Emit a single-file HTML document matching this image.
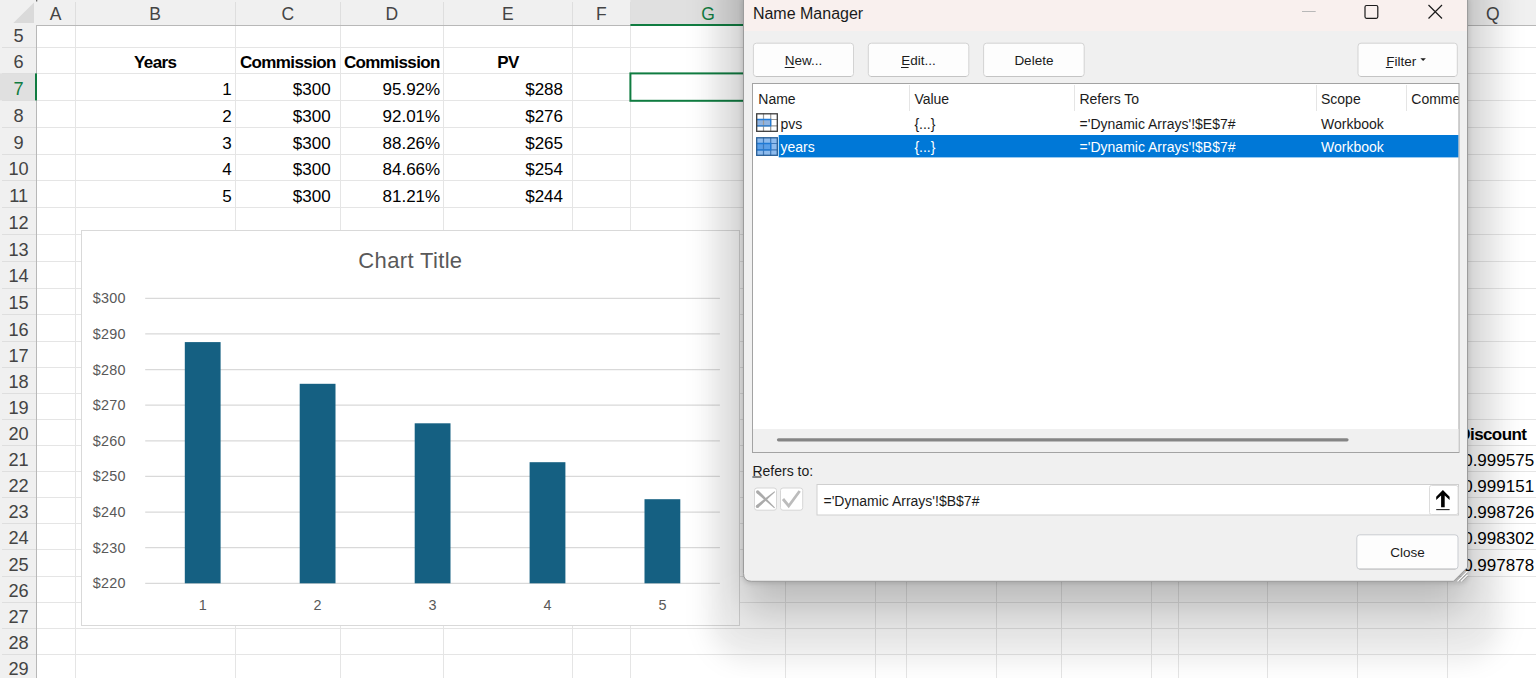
<!DOCTYPE html>
<html><head><meta charset="utf-8"><title>Name Manager</title>
<style>
html,body{margin:0;padding:0;width:1536px;height:678px;overflow:hidden;background:#fff;font-family:"Liberation Sans", sans-serif;}
svg text{font-family:"Liberation Sans", sans-serif;}
</style></head><body>
<svg width="1536" height="678" viewBox="0 0 1536 678" style="position:absolute;left:0;top:0">
<rect x="0" y="0" width="1536" height="678" fill="#ffffff"/>
<path d="M75.5 25.5V678 M235.5 25.5V678 M340.5 25.5V678 M443.5 25.5V678 M572.5 25.5V678 M630.5 25.5V678 M785.5 25.5V678 M875.5 25.5V678 M906.5 25.5V678 M996.5 25.5V678 M1061.5 25.5V678 M1151.5 25.5V678 M1178.5 25.5V678 M1267.5 25.5V678 M1357.5 25.5V678 M1447.5 25.5V678 M1538.5 25.5V678 M36 47.5H1536 M36 73.5H1536 M36 100.5H1536 M36 127.5H1536 M36 154.5H1536 M36 180.5H1536 M36 207.5H1536 M36 234.5H1536 M36 261.5H1536 M36 288.5H1536 M36 314.5H1536 M36 341.5H1536 M36 367.5H1536 M36 393.5H1536 M36 419.5H1536 M36 445.5H1536 M36 471.5H1536 M36 497.5H1536 M36 523.5H1536 M36 549.5H1536 M36 576.5H1536 M36 602.5H1536 M36 628.5H1536 M36 654.5H1536 M36 680.5H1536" stroke="#e5e5e5" stroke-width="1" fill="none"/>
<rect x="630.4" y="73.4" width="155" height="27.4" fill="none" stroke="#107c41" stroke-width="2"/>
<rect x="0" y="0" width="1536" height="25.5" fill="#f0f0f0"/>
<rect x="0" y="0" width="36.4" height="678" fill="#f0f0f0"/>
<rect x="630.4" y="0" width="155.10000000000002" height="25.5" fill="#e0e0e0"/>
<rect x="0" y="73.4" width="36.4" height="27.0" fill="#e0e0e0"/>
<path d="M75.5 2V25 M235.5 2V25 M340.5 2V25 M443.5 2V25 M572.5 2V25 M630.5 2V25 M785.5 2V25 M875.5 2V25 M906.5 2V25 M996.5 2V25 M1061.5 2V25 M1151.5 2V25 M1178.5 2V25 M1267.5 2V25 M1357.5 2V25 M1447.5 2V25 M1538.5 2V25 M2 47.5H36 M2 73.5H36 M2 100.5H36 M2 127.5H36 M2 154.5H36 M2 180.5H36 M2 207.5H36 M2 234.5H36 M2 261.5H36 M2 288.5H36 M2 314.5H36 M2 341.5H36 M2 367.5H36 M2 393.5H36 M2 419.5H36 M2 445.5H36 M2 471.5H36 M2 497.5H36 M2 523.5H36 M2 549.5H36 M2 576.5H36 M2 602.5H36 M2 628.5H36 M2 654.5H36 M2 680.5H36" stroke="#dedede" stroke-width="1" fill="none"/>
<path d="M36 25.5H1536 M36.5 25V678" stroke="#b8b8b8" stroke-width="1" fill="none"/>
<rect x="630.4" y="24" width="155.10000000000002" height="2" fill="#107c41"/>
<rect x="35" y="73.4" width="2" height="27.0" fill="#107c41"/>
<rect x="36" y="0" width="1.3" height="1.5" fill="#6a6a6a"/>
<path d="M13.3 23 L34 2.5 L34 23 Z" fill="#dadada"/>
<text x="55.7" y="19.7" font-size="17.5" fill="#444444" text-anchor="middle" font-family='"Liberation Sans", sans-serif'>A</text>
<text x="155.2" y="19.7" font-size="17.5" fill="#444444" text-anchor="middle" font-family='"Liberation Sans", sans-serif'>B</text>
<text x="287.9" y="19.7" font-size="17.5" fill="#444444" text-anchor="middle" font-family='"Liberation Sans", sans-serif'>C</text>
<text x="391.9" y="19.7" font-size="17.5" fill="#444444" text-anchor="middle" font-family='"Liberation Sans", sans-serif'>D</text>
<text x="507.9" y="19.7" font-size="17.5" fill="#444444" text-anchor="middle" font-family='"Liberation Sans", sans-serif'>E</text>
<text x="601.4" y="19.7" font-size="17.5" fill="#444444" text-anchor="middle" font-family='"Liberation Sans", sans-serif'>F</text>
<text x="708.0" y="19.7" font-size="17.5" fill="#107c41" text-anchor="middle" font-family='"Liberation Sans", sans-serif'>G</text>
<text x="830.5" y="19.7" font-size="17.5" fill="#444444" text-anchor="middle" font-family='"Liberation Sans", sans-serif'>H</text>
<text x="891.0" y="19.7" font-size="17.5" fill="#444444" text-anchor="middle" font-family='"Liberation Sans", sans-serif'>I</text>
<text x="951.5" y="19.7" font-size="17.5" fill="#444444" text-anchor="middle" font-family='"Liberation Sans", sans-serif'>J</text>
<text x="1029.0" y="19.7" font-size="17.5" fill="#444444" text-anchor="middle" font-family='"Liberation Sans", sans-serif'>K</text>
<text x="1106.4" y="19.7" font-size="17.5" fill="#444444" text-anchor="middle" font-family='"Liberation Sans", sans-serif'>L</text>
<text x="1164.8" y="19.7" font-size="17.5" fill="#444444" text-anchor="middle" font-family='"Liberation Sans", sans-serif'>M</text>
<text x="1223.0" y="19.7" font-size="17.5" fill="#444444" text-anchor="middle" font-family='"Liberation Sans", sans-serif'>N</text>
<text x="1312.7" y="19.7" font-size="17.5" fill="#444444" text-anchor="middle" font-family='"Liberation Sans", sans-serif'>O</text>
<text x="1402.7" y="19.7" font-size="17.5" fill="#444444" text-anchor="middle" font-family='"Liberation Sans", sans-serif'>P</text>
<text x="1492.9" y="19.7" font-size="17.5" fill="#444444" text-anchor="middle" font-family='"Liberation Sans", sans-serif'>Q</text>
<text x="18.6" y="42.3" font-size="18.2" fill="#444444" text-anchor="middle" font-family='"Liberation Sans", sans-serif'>5</text>
<text x="18.6" y="67.7" font-size="18.2" fill="#444444" text-anchor="middle" font-family='"Liberation Sans", sans-serif'>6</text>
<text x="18.6" y="94.7" font-size="18.2" fill="#107c41" text-anchor="middle" font-family='"Liberation Sans", sans-serif'>7</text>
<text x="18.6" y="121.7" font-size="18.2" fill="#444444" text-anchor="middle" font-family='"Liberation Sans", sans-serif'>8</text>
<text x="18.6" y="148.5" font-size="18.2" fill="#444444" text-anchor="middle" font-family='"Liberation Sans", sans-serif'>9</text>
<text x="18.6" y="175.1" font-size="18.2" fill="#444444" text-anchor="middle" font-family='"Liberation Sans", sans-serif'>10</text>
<text x="18.6" y="202.0" font-size="18.2" fill="#444444" text-anchor="middle" font-family='"Liberation Sans", sans-serif'>11</text>
<text x="18.6" y="228.7" font-size="18.2" fill="#444444" text-anchor="middle" font-family='"Liberation Sans", sans-serif'>12</text>
<text x="18.6" y="255.9" font-size="18.2" fill="#444444" text-anchor="middle" font-family='"Liberation Sans", sans-serif'>13</text>
<text x="18.6" y="282.3" font-size="18.2" fill="#444444" text-anchor="middle" font-family='"Liberation Sans", sans-serif'>14</text>
<text x="18.6" y="309.0" font-size="18.2" fill="#444444" text-anchor="middle" font-family='"Liberation Sans", sans-serif'>15</text>
<text x="18.6" y="336.0" font-size="18.2" fill="#444444" text-anchor="middle" font-family='"Liberation Sans", sans-serif'>16</text>
<text x="18.6" y="362.1" font-size="18.2" fill="#444444" text-anchor="middle" font-family='"Liberation Sans", sans-serif'>17</text>
<text x="18.6" y="387.7" font-size="18.2" fill="#444444" text-anchor="middle" font-family='"Liberation Sans", sans-serif'>18</text>
<text x="18.6" y="413.7" font-size="18.2" fill="#444444" text-anchor="middle" font-family='"Liberation Sans", sans-serif'>19</text>
<text x="18.6" y="439.8" font-size="18.2" fill="#444444" text-anchor="middle" font-family='"Liberation Sans", sans-serif'>20</text>
<text x="18.6" y="465.7" font-size="18.2" fill="#444444" text-anchor="middle" font-family='"Liberation Sans", sans-serif'>21</text>
<text x="18.6" y="491.8" font-size="18.2" fill="#444444" text-anchor="middle" font-family='"Liberation Sans", sans-serif'>22</text>
<text x="18.6" y="517.8" font-size="18.2" fill="#444444" text-anchor="middle" font-family='"Liberation Sans", sans-serif'>23</text>
<text x="18.6" y="544.1" font-size="18.2" fill="#444444" text-anchor="middle" font-family='"Liberation Sans", sans-serif'>24</text>
<text x="18.6" y="570.6" font-size="18.2" fill="#444444" text-anchor="middle" font-family='"Liberation Sans", sans-serif'>25</text>
<text x="18.6" y="596.7" font-size="18.2" fill="#444444" text-anchor="middle" font-family='"Liberation Sans", sans-serif'>26</text>
<text x="18.6" y="623.0" font-size="18.2" fill="#444444" text-anchor="middle" font-family='"Liberation Sans", sans-serif'>27</text>
<text x="18.6" y="648.8" font-size="18.2" fill="#444444" text-anchor="middle" font-family='"Liberation Sans", sans-serif'>28</text>
<text x="18.6" y="674.8" font-size="18.2" fill="#444444" text-anchor="middle" font-family='"Liberation Sans", sans-serif'>29</text>
<text x="155.2" y="67.8" font-size="17" fill="#000" text-anchor="middle" font-weight="bold" letter-spacing="-0.6" font-family='"Liberation Sans", sans-serif'>Years</text>
<text x="287.9" y="67.8" font-size="17" fill="#000" text-anchor="middle" font-weight="bold" letter-spacing="-0.6" font-family='"Liberation Sans", sans-serif'>Commission</text>
<text x="391.9" y="67.8" font-size="17" fill="#000" text-anchor="middle" font-weight="bold" letter-spacing="-0.6" font-family='"Liberation Sans", sans-serif'>Commission</text>
<text x="507.9" y="67.8" font-size="17" fill="#000" text-anchor="middle" font-weight="bold" letter-spacing="-0.6" font-family='"Liberation Sans", sans-serif'>PV</text>
<text x="231.8" y="94.7" font-size="17" fill="#000" text-anchor="end" font-family='"Liberation Sans", sans-serif'>1</text>
<text x="330.6" y="94.7" font-size="17" fill="#000" text-anchor="end" font-family='"Liberation Sans", sans-serif'>$300</text>
<text x="440.2" y="94.7" font-size="17" fill="#000" text-anchor="end" font-family='"Liberation Sans", sans-serif'>95.92%</text>
<text x="563.0" y="94.7" font-size="17" fill="#000" text-anchor="end" font-family='"Liberation Sans", sans-serif'>$288</text>
<text x="231.8" y="121.7" font-size="17" fill="#000" text-anchor="end" font-family='"Liberation Sans", sans-serif'>2</text>
<text x="330.6" y="121.7" font-size="17" fill="#000" text-anchor="end" font-family='"Liberation Sans", sans-serif'>$300</text>
<text x="440.2" y="121.7" font-size="17" fill="#000" text-anchor="end" font-family='"Liberation Sans", sans-serif'>92.01%</text>
<text x="563.0" y="121.7" font-size="17" fill="#000" text-anchor="end" font-family='"Liberation Sans", sans-serif'>$276</text>
<text x="231.8" y="148.5" font-size="17" fill="#000" text-anchor="end" font-family='"Liberation Sans", sans-serif'>3</text>
<text x="330.6" y="148.5" font-size="17" fill="#000" text-anchor="end" font-family='"Liberation Sans", sans-serif'>$300</text>
<text x="440.2" y="148.5" font-size="17" fill="#000" text-anchor="end" font-family='"Liberation Sans", sans-serif'>88.26%</text>
<text x="563.0" y="148.5" font-size="17" fill="#000" text-anchor="end" font-family='"Liberation Sans", sans-serif'>$265</text>
<text x="231.8" y="175.1" font-size="17" fill="#000" text-anchor="end" font-family='"Liberation Sans", sans-serif'>4</text>
<text x="330.6" y="175.1" font-size="17" fill="#000" text-anchor="end" font-family='"Liberation Sans", sans-serif'>$300</text>
<text x="440.2" y="175.1" font-size="17" fill="#000" text-anchor="end" font-family='"Liberation Sans", sans-serif'>84.66%</text>
<text x="563.0" y="175.1" font-size="17" fill="#000" text-anchor="end" font-family='"Liberation Sans", sans-serif'>$254</text>
<text x="231.8" y="202.0" font-size="17" fill="#000" text-anchor="end" font-family='"Liberation Sans", sans-serif'>5</text>
<text x="330.6" y="202.0" font-size="17" fill="#000" text-anchor="end" font-family='"Liberation Sans", sans-serif'>$300</text>
<text x="440.2" y="202.0" font-size="17" fill="#000" text-anchor="end" font-family='"Liberation Sans", sans-serif'>81.21%</text>
<text x="563.0" y="202.0" font-size="17" fill="#000" text-anchor="end" font-family='"Liberation Sans", sans-serif'>$244</text>
<text x="1526.3" y="439.9" font-size="17" fill="#000" text-anchor="end" font-weight="bold" letter-spacing="-0.6" font-family='"Liberation Sans", sans-serif'>Discount</text>
<text x="1534.1" y="465.7" font-size="17" fill="#000" text-anchor="end" font-family='"Liberation Sans", sans-serif'>0.999575</text>
<text x="1534.1" y="491.8" font-size="17" fill="#000" text-anchor="end" font-family='"Liberation Sans", sans-serif'>0.999151</text>
<text x="1534.1" y="517.8" font-size="17" fill="#000" text-anchor="end" font-family='"Liberation Sans", sans-serif'>0.998726</text>
<text x="1534.1" y="544.1" font-size="17" fill="#000" text-anchor="end" font-family='"Liberation Sans", sans-serif'>0.998302</text>
<text x="1534.1" y="570.6" font-size="17" fill="#000" text-anchor="end" font-family='"Liberation Sans", sans-serif'>0.997878</text>
<rect x="81.5" y="230.5" width="658" height="395" fill="#ffffff" stroke="#d9d9d9" stroke-width="1"/>
<text x="410.4" y="268.1" font-size="22" letter-spacing="0.35" fill="#595959" text-anchor="middle" font-family='"Liberation Sans", sans-serif'>Chart Title</text>
<text x="125.9" y="303.3" font-size="14.4" letter-spacing="0.3" fill="#595959" text-anchor="end" font-family='"Liberation Sans", sans-serif'>$300</text>
<text x="125.9" y="338.9" font-size="14.4" letter-spacing="0.3" fill="#595959" text-anchor="end" font-family='"Liberation Sans", sans-serif'>$290</text>
<text x="125.9" y="374.6" font-size="14.4" letter-spacing="0.3" fill="#595959" text-anchor="end" font-family='"Liberation Sans", sans-serif'>$280</text>
<text x="125.9" y="410.2" font-size="14.4" letter-spacing="0.3" fill="#595959" text-anchor="end" font-family='"Liberation Sans", sans-serif'>$270</text>
<text x="125.9" y="445.8" font-size="14.4" letter-spacing="0.3" fill="#595959" text-anchor="end" font-family='"Liberation Sans", sans-serif'>$260</text>
<text x="125.9" y="481.4" font-size="14.4" letter-spacing="0.3" fill="#595959" text-anchor="end" font-family='"Liberation Sans", sans-serif'>$250</text>
<text x="125.9" y="517.0" font-size="14.4" letter-spacing="0.3" fill="#595959" text-anchor="end" font-family='"Liberation Sans", sans-serif'>$240</text>
<text x="125.9" y="552.7" font-size="14.4" letter-spacing="0.3" fill="#595959" text-anchor="end" font-family='"Liberation Sans", sans-serif'>$230</text>
<text x="125.9" y="588.3" font-size="14.4" letter-spacing="0.3" fill="#595959" text-anchor="end" font-family='"Liberation Sans", sans-serif'>$220</text>
<path d="M145.2 298.30H719.9 M145.2 333.93H719.9 M145.2 369.55H719.9 M145.2 405.17H719.9 M145.2 440.80H719.9 M145.2 476.42H719.9 M145.2 512.05H719.9 M145.2 547.67H719.9 M145.2 583.30H719.9" stroke="#d9d9d9" stroke-width="1.2" fill="none"/>
<rect x="184.8" y="342.1" width="35.8" height="241.2" fill="#156082"/>
<text x="202.7" y="609.6" font-size="14.4" fill="#595959" text-anchor="middle" font-family='"Liberation Sans", sans-serif'>1</text>
<rect x="299.7" y="383.8" width="35.8" height="199.5" fill="#156082"/>
<text x="317.6" y="609.6" font-size="14.4" fill="#595959" text-anchor="middle" font-family='"Liberation Sans", sans-serif'>2</text>
<rect x="414.7" y="423.3" width="35.8" height="160.0" fill="#156082"/>
<text x="432.6" y="609.6" font-size="14.4" fill="#595959" text-anchor="middle" font-family='"Liberation Sans", sans-serif'>3</text>
<rect x="529.6" y="462.2" width="35.8" height="121.1" fill="#156082"/>
<text x="547.5" y="609.6" font-size="14.4" fill="#595959" text-anchor="middle" font-family='"Liberation Sans", sans-serif'>4</text>
<rect x="644.5" y="499.2" width="35.8" height="84.1" fill="#156082"/>
<text x="662.4" y="609.6" font-size="14.4" fill="#595959" text-anchor="middle" font-family='"Liberation Sans", sans-serif'>5</text>
</svg>
<svg width="1536" height="678" viewBox="0 0 1536 678" style="position:absolute;left:0;top:0">
<defs><filter id="sh" x="-40%" y="-40%" width="180%" height="180%"><feGaussianBlur stdDeviation="12"/></filter><filter id="shb" x="-40%" y="-40%" width="180%" height="180%"><feGaussianBlur stdDeviation="20"/></filter><filter id="sh2" x="-10%" y="-10%" width="120%" height="120%"><feGaussianBlur stdDeviation="2.5"/></filter><clipPath id="lvclip"><rect x="753" y="84" width="705.5" height="368"/></clipPath></defs>
<rect x="708.5" y="-40" width="794.0" height="701.3" rx="40" fill="rgba(0,0,0,0.08)" filter="url(#sh)"/>
<rect x="743.5" y="-40" width="724.0" height="651.3" rx="10" fill="rgba(0,0,0,0.2)" filter="url(#shb)"/>
<rect x="742.5" y="-5" width="726.0" height="588.3" rx="8" fill="rgba(0,0,0,0.15)" filter="url(#sh2)"/>
<path d="M743.5 -10 H1467.5 V567.3 L1453.5 581.3 H751.5 Q743.5 581.3 743.5 573.3 Z" fill="#f0f0f0" stroke="#9c9c9c" stroke-width="1"/>
<rect x="744.0" y="0" width="723.0" height="31" fill="#f9f0ee"/>
<text x="752.9" y="18.6" font-size="16" fill="#1b1b1b" font-family='"Liberation Sans", sans-serif'>Name Manager</text>
<path d="M1302 11.5H1315.7" stroke="#b8b8b8" stroke-width="1"/>
<rect x="1365" y="5.5" width="12.8" height="12.8" rx="1.5" fill="none" stroke="#1b1b1b" stroke-width="1.2"/>
<path d="M1428.5 5L1442 18.5M1442 5L1428.5 18.5" stroke="#1b1b1b" stroke-width="1.2"/>
<rect x="753.4" y="43.2" width="100.10000000000002" height="33.3" rx="3" fill="#fdfdfd" stroke="#d3d3d3" stroke-width="1"/>
<path d="M755.9 76.5H851" stroke="#c4c4c4" stroke-width="1"/>
<text x="803.5" y="65.0" font-size="13.5" fill="#1b1b1b" text-anchor="middle" font-family='"Liberation Sans", sans-serif'>New...</text>
<path d="M784.7 67.5H794.6" stroke="#1b1b1b" stroke-width="1"/>
<rect x="868.3" y="43.2" width="100.5" height="33.3" rx="3" fill="#fdfdfd" stroke="#d3d3d3" stroke-width="1"/>
<path d="M870.8 76.5H966.3" stroke="#c4c4c4" stroke-width="1"/>
<text x="918.5" y="65.0" font-size="13.5" fill="#1b1b1b" text-anchor="middle" font-family='"Liberation Sans", sans-serif'>Edit...</text>
<path d="M901 67.5H908.6 M1013 67.5H1022.8" stroke="#1b1b1b" stroke-width="1"/>
<rect x="983.6" y="43.2" width="100.60000000000002" height="33.3" rx="3" fill="#fdfdfd" stroke="#d3d3d3" stroke-width="1"/>
<path d="M986.1 76.5H1081.7" stroke="#c4c4c4" stroke-width="1"/>
<text x="1033.9" y="65.0" font-size="13.5" fill="#1b1b1b" text-anchor="middle" font-family='"Liberation Sans", sans-serif'>Delete</text>
<rect x="1358.0" y="43.2" width="99.29999999999995" height="33.3" rx="3" fill="#fdfdfd" stroke="#d3d3d3" stroke-width="1"/>
<path d="M1360.5 76.5H1454.8" stroke="#c4c4c4" stroke-width="1"/>
<text x="1407.7" y="65.0" font-size="13.5" fill="#1b1b1b" text-anchor="middle" font-family='"Liberation Sans", sans-serif'></text>
<text x="1386.3" y="65.8" font-size="13.5" fill="#1b1b1b" font-family='"Liberation Sans", sans-serif'>Filter</text>
<path d="M1385.8 67.5H1392.9" stroke="#1b1b1b" stroke-width="1"/>
<path d="M1420.4 58.2H1425.9L1423.15 61Z" fill="#1b1b1b"/>
<rect x="752.5" y="83.5" width="706.5" height="369" fill="#ffffff" stroke="#a3a3a3" stroke-width="1"/>
<rect x="753" y="429" width="705.5" height="23" fill="#f0f0f0"/>
<path d="M778.5 439.8H1347" stroke="#858585" stroke-width="3.2" stroke-linecap="round"/>
<g clip-path="url(#lvclip)">
<path d="M909.5 85V111" stroke="#e5e5e5" stroke-width="1"/>
<path d="M1074.5 85V111" stroke="#e5e5e5" stroke-width="1"/>
<path d="M1316.5 85V111" stroke="#e5e5e5" stroke-width="1"/>
<path d="M1406.5 85V111" stroke="#e5e5e5" stroke-width="1"/>
<text x="758.3" y="104.3" font-size="14" fill="#1b1b1b" font-family='"Liberation Sans", sans-serif'>Name</text>
<text x="914.4" y="104.3" font-size="14" fill="#1b1b1b" font-family='"Liberation Sans", sans-serif'>Value</text>
<text x="1079.4" y="104.3" font-size="14" fill="#1b1b1b" font-family='"Liberation Sans", sans-serif'>Refers To</text>
<text x="1321" y="104.3" font-size="14" fill="#1b1b1b" font-family='"Liberation Sans", sans-serif'>Scope</text>
<text x="1411.3" y="104.3" font-size="14" fill="#1b1b1b" font-family='"Liberation Sans", sans-serif'>Comment</text>
<rect x="778.7" y="135" width="680" height="22.4" fill="#0078d7"/>
<text x="780.5" y="128.7" font-size="14" fill="#1b1b1b" font-family='"Liberation Sans", sans-serif'>pvs</text>
<text x="914.4" y="128.7" font-size="14" fill="#1b1b1b" font-family='"Liberation Sans", sans-serif'>{...}</text>
<text x="1079.6" y="128.7" font-size="14" fill="#1b1b1b" font-family='"Liberation Sans", sans-serif'>='Dynamic Arrays'!$E$7#</text>
<text x="1321" y="128.7" font-size="14" fill="#1b1b1b" font-family='"Liberation Sans", sans-serif'>Workbook</text>
<text x="780.5" y="152" font-size="14" fill="#ffffff" font-family='"Liberation Sans", sans-serif'>years</text>
<text x="914.4" y="152" font-size="14" fill="#ffffff" font-family='"Liberation Sans", sans-serif'>{...}</text>
<text x="1079.6" y="152" font-size="14" fill="#ffffff" font-family='"Liberation Sans", sans-serif'>='Dynamic Arrays'!$B$7#</text>
<text x="1321" y="152" font-size="14" fill="#ffffff" font-family='"Liberation Sans", sans-serif'>Workbook</text>
</g>
<rect x="756.1" y="113.2" width="21.8" height="18.7" fill="#ffffff"/>
<rect x="756.7" y="119.5" width="14.2" height="6.6" fill="#8fb3e0"/>
<path d="M763.5 113.2V131.9 M770.7 113.2V131.9 M756.1 119.5H777.9 M756.1 125.9H777.9" fill="none" stroke="#9a9a9a" stroke-width="1.2"/>
<path d="M756.7 119.5H770.7V125.9H756.7" fill="none" stroke="#1f7ad6" stroke-width="1.3"/>
<rect x="756.7" y="113.8" width="20.6" height="17.5" fill="none" stroke="#3c3c3c" stroke-width="1.3"/>
<rect x="756.1" y="137.2" width="21.8" height="18.7" fill="#8ebbed"/>
<rect x="756.7" y="143.5" width="14.2" height="6.6" fill="#5a9fe8"/>
<path d="M763.5 137.2V155.89999999999998 M770.7 137.2V155.89999999999998 M756.1 143.5H777.9 M756.1 149.89999999999998H777.9" fill="none" stroke="#3f78b8" stroke-width="1.2"/>
<path d="M756.7 143.5H770.7V149.89999999999998H756.7" fill="none" stroke="#1f7ad6" stroke-width="1.3"/>
<rect x="756.7" y="137.79999999999998" width="20.6" height="17.5" fill="none" stroke="#2a5f95" stroke-width="1.3"/>
<text x="752.4" y="475.6" font-size="14" fill="#1b1b1b" font-family='"Liberation Sans", sans-serif'>Refers to:</text>
<path d="M752.4 477H761.4" stroke="#1b1b1b" stroke-width="1"/>
<rect x="754.5" y="488" width="22" height="22.2" rx="2.5" fill="#ffffff" stroke="#d6d6d6" stroke-width="1"/>
<rect x="780.5" y="488" width="22.2" height="22.2" rx="2.5" fill="#ffffff" stroke="#d6d6d6" stroke-width="1"/>
<polygon points="756.50,492.97 774.26,508.16 774.94,507.44 758.70,490.63" fill="#ababab"/><circle cx="757.6" cy="491.8" r="1.6" fill="#ababab"/>
<polygon points="758.44,507.62 775.12,491.98 774.48,491.22 756.36,505.18" fill="#ababab"/><circle cx="757.4" cy="506.4" r="1.6" fill="#ababab"/>
<path d="M783 499 L788.7 506 L799.7 491" fill="none" stroke="#bcbcbc" stroke-width="2.8"/>
<rect x="817" y="484.5" width="641.5" height="30.5" fill="#ffffff" stroke="#cfcfcf" stroke-width="1"/>
<text x="823.5" y="506.2" font-size="14" fill="#1b1b1b" font-family='"Liberation Sans", sans-serif'>='Dynamic Arrays'!$B$7#</text>
<rect x="1429.5" y="485.5" width="28.5" height="29" rx="2" fill="#ffffff" stroke="#dcdcdc" stroke-width="1"/>
<path d="M1442.9 490 L1449.6 496.7 L1449.6 500 L1444.7 495.4 V507.2 H1441.1 V495.4 L1436.2 500 V496.7 Z" fill="#000"/>
<path d="M1436.2 509.6H1449.6" stroke="#222" stroke-width="1.1"/>
<rect x="1356.8" y="534.8" width="101.20000000000005" height="34.30000000000007" rx="3" fill="#fdfdfd" stroke="#c9ccd1" stroke-width="1"/>
<path d="M1359.3 569.1H1455.5" stroke="#c4c4c4" stroke-width="1"/>
<text x="1407.4" y="557.1" font-size="13.5" fill="#1b1b1b" text-anchor="middle" font-family='"Liberation Sans", sans-serif'>Close</text>
<path d="M1457.5 581.3 L1467.5 571.3 M1461.0 581.3 L1467.5 574.8" stroke="#ffffff" stroke-width="1.2"/>
<path d="M1459.0 581.3 L1467.5 572.8 M1462.5 581.3 L1467.5 576.3" stroke="#a6a6a6" stroke-width="1"/>
</svg>
</body></html>
